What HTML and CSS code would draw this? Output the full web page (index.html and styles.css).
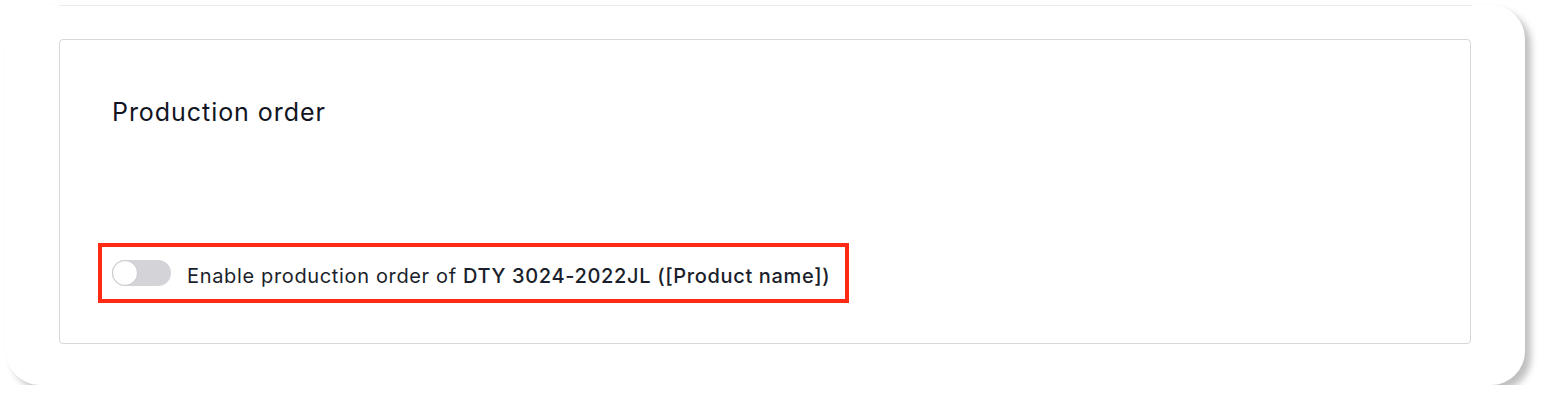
FILE: index.html
```html
<!DOCTYPE html>
<html lang="en">
<head>
  <meta charset="UTF-8" />
  <title>Production order</title>
  <meta name="viewport" content="width=device-width, initial-scale=1.0" />
  <link rel="stylesheet" href="styles.css">
</head>
<body>
  <div class="card">
    <div class="peek"></div>
    <div class="panel">
      <h2>Production order</h2>

      <div class="highlight">
        <label class="toggle-row">
          <span class="toggle"><span class="knob"></span></span>
          <span class="toggle-label">Enable production order of <strong>DTY 3024-2022JL ([Product name])</strong></span>
        </label>
      </div>
    </div>
  </div>
</body>
</html>
```

FILE: styles.css
```css
body {
  margin: 0;
  padding: 5px 0 0 6px;
  background-color: #fff;
  font-family: Inter, "Noto Sans", Arial, sans-serif;
  color: #161a26;
}
.card {
  width: 1519px;
  height: 380px;
  box-sizing: border-box;
  background-color: #fff;
  border-radius: 34px;
  box-shadow: 6px 6px 7px rgba(0, 0, 0, 0.25);
  padding: 0 0 0 53px;
}
.peek {
  width: 1413px;
  height: 1px;
  background-color: #ededf0;
}
.panel {
  margin-top: 33px;
  width: 1412px;
  height: 305px;
  box-sizing: border-box;
  border: 1px solid #d6d6dc;
  border-radius: 4px;
  padding: 56px 0 0 52px;
}
h2 {
  margin: 0;
  font-size: 25px;
  line-height: 32px;
  font-weight: 400;
  letter-spacing: 0.95px;
  color: #111522;
}
.highlight {
  display: inline-block;
  margin: 115px 0 0 -14px;
  border: 4px solid #ff2a12;
  padding: 0 15px 0 10px;
  height: 52px;
}
.toggle-row {
  display: flex;
  align-items: center;
  height: 52px;
  gap: 16px;
}
.toggle {
  display: block;
  width: 59px;
  height: 26px;
  margin-top: -1px;
  border-radius: 13px;
  background-color: #d3d3d8;
  position: relative;
}
.knob {
  position: absolute;
  left: 0;
  top: 0;
  width: 26px;
  height: 26px;
  box-sizing: border-box;
  border-radius: 50%;
  background-color: #fff;
  border: 1.5px solid #c9c9d0;
}
.toggle-label {
  padding-top: 5px;
  font-size: 20px;
  letter-spacing: 0.65px;
  color: #1b1f2b;
}
.toggle-label strong {
  font-weight: 500;
}
```
